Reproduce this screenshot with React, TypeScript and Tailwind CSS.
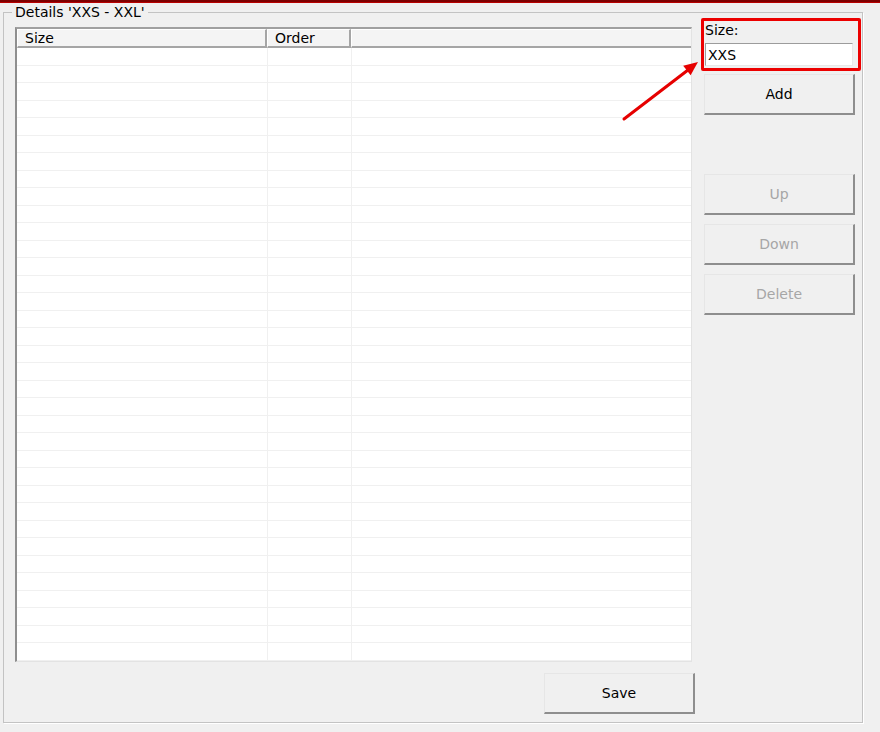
import clsx from "clsx";

const rows = Array.from({ length: 35 }, (_, i) => i);

function WinButton({ label, disabled, className }: { label: string; disabled?: boolean; className?: string }) {
  return (
    <button
      type="button"
      disabled={disabled}
      className={clsx(
        "h-[41px] w-[151px] bg-[#f0f0f0] text-[14px] leading-none",
        "border-t border-l border-t-[#e6e6e6] border-l-[#e6e6e6] border-r-2 border-b-2 border-r-[#8e8e8e] border-b-[#8e8e8e]",
        disabled ? "text-[#a6a6a6]" : "text-black",
        className
      )}
    >
      {label}
    </button>
  );
}

export default function App() {
  return (
    <div className="relative w-[880px] h-[732px] overflow-hidden bg-[#f0f0f0] text-[14px] text-black font-['DejaVu_Sans',sans-serif]">
      <div className="h-[2px] bg-[#7e0000]" />
      <div className="h-[1px] bg-[#b80000]" />

      <fieldset className="ml-[3px] mt-[1px] w-[860px] h-[719px] min-w-0 border border-[#c3c3c3] shadow-[1px_1px_0_#ffffff] pl-[11px] pt-[7px]">
        <legend className="-ml-[3px] px-[3px] leading-[16px]">Details 'XXS - XXL'</legend>

        <div className="flex gap-[6px]">
          {/* list + save */}
          <div className="flex w-[680px] flex-col">
            <div className="flex h-[635px] w-[677px] flex-col overflow-hidden bg-white border-t-2 border-l-2 border-t-[#a0a0a0] border-l-[#8f8f8f] border-r border-b border-r-[#e3e3e3] border-b-[#e3e3e3]">
              <div className="flex h-[19px] shrink-0 bg-[#f4f4f4] leading-[16px]">
                <div className="w-[250px] border-t border-l border-white border-r-2 border-b-2 border-r-[#a5a5a5] border-b-[#a5a5a5] pl-[7px]">
                  Size
                </div>
                <div className="w-[84px] border-t border-l border-white border-r-2 border-b-2 border-r-[#a5a5a5] border-b-[#a5a5a5] pl-[7px]">
                  Order
                </div>
                <div className="flex-1 border-t border-l border-white border-b-2 border-b-[#a5a5a5]" />
              </div>
              <div className="flex-1 overflow-hidden">
                {rows.map((r) => (
                  <div key={r} className="flex h-[17.5px] border-b border-[#f0f0f0]">
                    <div className="w-[251px] border-r border-[#f0f0f0]" />
                    <div className="w-[84px] border-r border-[#f0f0f0]" />
                    <div className="flex-1" />
                  </div>
                ))}
              </div>
            </div>
            <WinButton label="Save" className="mt-[11px] self-end" />
          </div>

          {/* right side */}
          <div className="-mt-[9px] flex w-[161px] flex-col">
            <div className="w-[160px] rounded-[2px] border-[3px] border-[#ec0000] pb-[2px]">
              <div className="mt-[1px] pl-[1px] leading-[16px]">Size:</div>
              <input
                readOnly
                value="XXS"
                className="mt-[5px] ml-[1px] block h-[23px] w-[148px] bg-white px-[2px] text-[14px] outline-none border border-t-[#9c9c9c] border-l-[#9c9c9c] border-r-[#e8e8e8] border-b-[#e8e8e8]"
              />
            </div>
            <WinButton label="Add" className="mt-[3px] ml-[3px]" />
            <WinButton label="Up" disabled className="mt-[59px] ml-[3px]" />
            <WinButton label="Down" disabled className="mt-[9px] ml-[3px]" />
            <WinButton label="Delete" disabled className="mt-[9px] ml-[3px]" />
          </div>
        </div>
      </fieldset>

      {/* annotation arrow */}
      <svg className="pointer-events-none absolute left-0 top-0" width="880" height="732" viewBox="0 0 880 732">
        <line x1="624" y1="119" x2="688" y2="70" stroke="#e60000" strokeWidth="3" strokeLinecap="round" />
        <polygon points="698,62 690.6,75.3 683.2,65.8" fill="#e60000" />
      </svg>
    </div>
  );
}
